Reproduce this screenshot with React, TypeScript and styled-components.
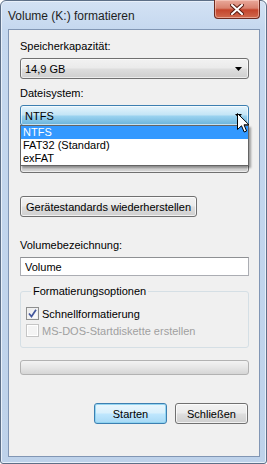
import React from "react"
import styled, { createGlobalStyle } from "styled-components"

const GlobalStyle = createGlobalStyle`
  html, body { margin: 0; padding: 0; background: #ffffff; }
  body { font-family: "Liberation Sans", Arial, sans-serif; font-size: 11px; color: #000; }
  * { box-sizing: border-box; }
`

const fileSystems = ["NTFS", "FAT32 (Standard)", "exFAT"]

const Arrow = () => (
    <svg width="7" height="4" viewBox="0 0 7 4"><path d="M0 0 H7 L3.5 4 Z" fill="#000" /></svg>
)

const Cursor = () => (
    <svg width="13" height="20" viewBox="0 0 13 20">
        <path d="M0.5 0.5 V16.5 L4.5 12.8 L7.2 19 L9.6 18 L7 11.8 H12 Z" fill="#fff" stroke="#000" strokeWidth="1" />
    </svg>
)

const App: React.FC = () => {
    return (
        <>
            <GlobalStyle />
            <Window>
                <TitleBar>
                    <Title>Volume (K:) formatieren</Title>
                    <CloseButton>
                        <svg width="14" height="11" viewBox="0 0 14 11">
                            <path d="M2 1 L12 10 M12 1 L2 10" stroke="#5a1c12" strokeWidth="4" strokeLinecap="square" />
                            <path d="M2 1 L12 10 M12 1 L2 10" stroke="#fff" strokeWidth="2" strokeLinecap="square" />
                        </svg>
                    </CloseButton>
                </TitleBar>
                <Client>
                    <Label>Speicherkapazität:</Label>
                    <Combo>
                        <span>14,9 GB</span>
                        <Arrow />
                    </Combo>
                    <Label>Dateisystem:</Label>
                    <ComboWrap>
                        <Combo open>
                            <span>NTFS</span>
                            <Arrow />
                        </Combo>
                        <DropList>
                            {fileSystems.map((fs, i) => (
                                <DropItem key={fs} selected={i === 0}>{fs}</DropItem>
                            ))}
                        </DropList>
                        <CursorSpot><Cursor /></CursorSpot>
                    </ComboWrap>
                    {/* allocation unit row, hidden under the open list */}
                    <Label />
                    <Combo>
                        <span />
                        <Arrow />
                    </Combo>
                    <PushButton wide>Gerätestandards wiederherstellen</PushButton>
                    <Label gap={21}>Volumebezeichnung:</Label>
                    <TextField defaultValue="Volume" />
                    <Group>
                        <Legend>Formatierungsoptionen</Legend>
                        <CheckRow>
                            <CheckBox checked>
                                <svg width="9" height="9" viewBox="0 0 9 9">
                                    <path d="M1 4.5 L3.5 7.5 L8 0.8" fill="none" stroke="#44579c" strokeWidth="1.7" />
                                </svg>
                            </CheckBox>
                            <span>Schnellformatierung</span>
                        </CheckRow>
                        <CheckRow disabled>
                            <CheckBox />
                            <span>MS-DOS-Startdiskette erstellen</span>
                        </CheckRow>
                    </Group>
                    <Progress />
                    <ButtonRow>
                        <PushButton primary>Starten</PushButton>
                        <PushButton>Schließen</PushButton>
                    </ButtonRow>
                </Client>
            </Window>
        </>
    )
}

const Window = styled.div`
  width: 267px;
  height: 464px;
  display: flex;
  flex-direction: column;
  border: 1px solid #5d6f87;
  border-radius: 6px 6px 3px 3px;
  background: linear-gradient(180deg, #d3e2f4 0px, #c5d8ef 28px, #bed2ea 100%);
  box-shadow: inset 0 0 0 1px #e8f0fa;
`

const TitleBar = styled.div`
  height: 28px;
  display: flex;
  justify-content: space-between;
  align-items: flex-start;
  padding-left: 7px;
`

const Title = styled.div`
  font-size: 12px;
  color: #1e1e1e;
  margin-top: 8px;
`

const CloseButton = styled.div`
  width: 46px;
  height: 19px;
  margin-right: 6px;
  margin-top: -1px;
  border: 1px solid #6d2a1f;
  border-top: none;
  border-radius: 0 0 4px 4px;
  background: linear-gradient(180deg, #e9a99b 0%, #d9826f 45%, #c4452c 55%, #d06a4f 100%);
  box-shadow: inset 0 0 0 1px rgba(255, 220, 210, 0.5);
  display: flex;
  align-items: center;
  justify-content: center;
`

const Client = styled.div`
  flex: 1;
  margin: 0 6px 6px 7px;
  border: 1px solid #8196b4;
  background: #f0f0f0;
  padding: 9px 10px 0 11px;
  display: flex;
  flex-direction: column;
  align-items: flex-start;
`

const Label = styled.div<{ gap?: number }>`
  height: 14px;
  line-height: 14px;
  margin-top: ${p => p.gap ?? 0}px;
  margin-bottom: 5px;
  color: #000;
`

const ComboWrap = styled.div`
  position: relative;
  width: 100%;
  z-index: 2;
`

const Combo = styled.div<{ open?: boolean }>`
  width: 100%;
  height: 21px;
  display: flex;
  align-items: center;
  justify-content: space-between;
  padding: 0 6px 0 4px;
  margin-bottom: 7px;
  border: 1px solid ${p => (p.open ? "#3c7fb1" : "#707070")};
  border-radius: 3px;
  background: ${p =>
      p.open
          ? "linear-gradient(180deg, #e5f4fc 0%, #c4e5f6 45%, #98d1ef 55%, #68b3db 100%)"
          : "linear-gradient(180deg, #f2f2f2 0%, #ebebeb 45%, #dddddd 55%, #cfcfcf 100%)"};
  box-shadow: inset 0 0 0 1px rgba(255, 255, 255, 0.6);
`

const DropList = styled.div`
  position: absolute;
  top: 20px;
  left: 0;
  width: 229px;
  border: 1px solid #646464;
  background: #fff;
  box-shadow: 2px 2px 2px rgba(0, 0, 0, 0.35);
`

const DropItem = styled.div<{ selected?: boolean }>`
  height: 13px;
  line-height: 13px;
  padding-left: 2px;
  background: ${p => (p.selected ? "#3399ff" : "transparent")};
  color: ${p => (p.selected ? "#fff" : "#000")};
`

const CursorSpot = styled.div`
  position: absolute;
  top: 8px;
  left: 217px;
  line-height: 0;
`

const PushButton = styled.button<{ primary?: boolean; wide?: boolean }>`
  height: 21px;
  width: ${p => (p.wide ? "177px" : "73px")};
  margin-top: ${p => (p.wide ? "16px" : "0")};
  padding: 0;
  font-family: "Liberation Sans", Arial, sans-serif;
  font-size: 11px;
  color: #000;
  border: 1px solid ${p => (p.primary ? "#3c7fb1" : "#707070")};
  border-radius: 3px;
  background: ${p =>
      p.primary
          ? "linear-gradient(180deg, #eaf6fd 0%, #d9f0fc 45%, #bee6fd 55%, #a7d9f5 100%)"
          : "linear-gradient(180deg, #f2f2f2 0%, #ebebeb 45%, #dddddd 55%, #cfcfcf 100%)"};
  box-shadow: inset 0 0 0 1px ${p => (p.primary ? "rgba(140, 210, 240, 0.9)" : "rgba(255, 255, 255, 0.7)")};
`

const TextField = styled.input.attrs({ type: "text" })`
  width: 100%;
  height: 19px;
  margin: 0;
  padding: 0 4px;
  font-family: "Liberation Sans", Arial, sans-serif;
  font-size: 11px;
  border: 1px solid #abadb3;
  border-top-color: #8e9093;
  background: #fff;
  outline: none;
`

const Group = styled.fieldset`
  width: 100%;
  height: 64px;
  margin: 8px 0 0 0;
  padding: 7px 6px 0 5px;
  border: 1px solid #d5dfe5;
  border-radius: 3px;
`

const Legend = styled.legend`
  padding: 0 2px;
  margin-left: 5px;
  line-height: 14px;
`

const CheckRow = styled.div<{ disabled?: boolean }>`
  display: flex;
  align-items: center;
  gap: 3px;
  height: 17px;
  color: ${p => (p.disabled ? "#a0a0a0" : "#000")};
`

const CheckBox = styled.span<{ checked?: boolean }>`
  width: 13px;
  height: 13px;
  display: flex;
  align-items: center;
  justify-content: center;
  border: 1px solid ${p => (p.checked ? "#8e8f8f" : "#c5c5c5")};
  background: ${p => (p.checked ? "linear-gradient(135deg, #e8e8e8 0%, #ffffff 100%)" : "#f4f4f4")};
  box-shadow: inset 0 0 0 1px ${p => (p.checked ? "#f0f0f0" : "#ffffff")};
`

const Progress = styled.div`
  width: 100%;
  height: 15px;
  margin-top: 12px;
  border: 1px solid #b2b2b2;
  border-radius: 3px;
  background: linear-gradient(180deg, #f3f3f3 0%, #e6e6e6 50%, #d6d6d6 100%);
`

const ButtonRow = styled.div`
  align-self: flex-end;
  display: flex;
  gap: 8px;
  margin-top: 28px;
  margin-right: 1px;
`

export default App
